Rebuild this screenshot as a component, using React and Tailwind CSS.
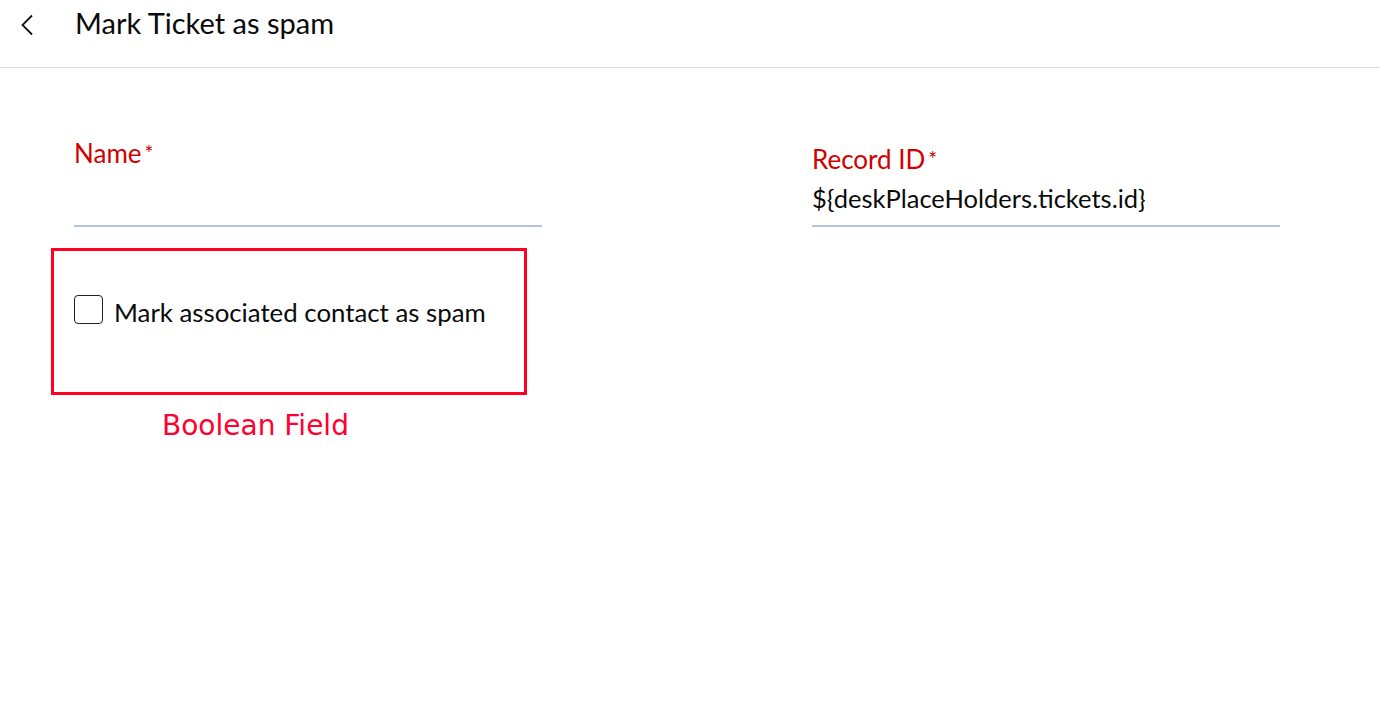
export default function App() {
  return (
    <div className="w-[1380px] h-[706px] bg-white overflow-hidden" style={{ fontFamily: "Lato, 'Noto Sans', sans-serif" }}>
      <div className="h-[68px] border-b border-[#dcdcdc] flex items-start">
        <div className="w-[75px] h-[50px] flex items-center pl-[20px]">
          <svg width="14" height="22" viewBox="0 0 14 22" fill="none">
            <path d="M12 1.5 L2.5 11 L12 20.5" stroke="#111" strokeWidth="1.8" />
          </svg>
        </div>
        <div className="text-[29px] text-[#0a0a0a] leading-[46px]">Mark Ticket as spam</div>
      </div>
      <div className="flex pl-[74px] pt-[67px]">
        <div className="w-[738px] flex flex-col">
          <div className="w-[468px] h-[92px] border-b-2 border-[#b8c4d6] pt-[2px]">
            <div className="text-[26px] text-[#d20000] leading-[32px]">Name<span className="text-[21px] align-top ml-[3px]">*</span></div>
          </div>
          <div className="-ml-[23px] mt-[21px] w-[476px] h-[147px] border-[3px] border-[#ff0022] flex items-start pl-[20px] pt-[44px]">
            <div className="w-[29px] h-[29px] rounded-[4px] border-[1.5px] border-[#1c2033]"></div>
            <div className="ml-[11px] mt-[2px] text-[25.8px] text-[#0a0a0a] leading-[30px]">Mark associated contact as spam</div>
          </div>
          <div className="ml-[88px] mt-[14px] text-[28px] text-[#ff0030] leading-[34px]" style={{ fontFamily: "'DejaVu Sans', sans-serif" }}>Boolean Field</div>
        </div>
        <div className="w-[468px] h-[92px] border-b-2 border-[#b8c4d6] pt-[8px]">
          <div className="text-[26px] text-[#d20000] leading-[32px]">Record ID<span className="text-[21px] align-top ml-[3px]">*</span></div>
          <div className="mt-[7px] text-[25.5px] text-[#0a0a0a] leading-[32px]">{"${deskPlaceHolders.tickets.id}"}</div>
        </div>
      </div>
    </div>
  );
}
